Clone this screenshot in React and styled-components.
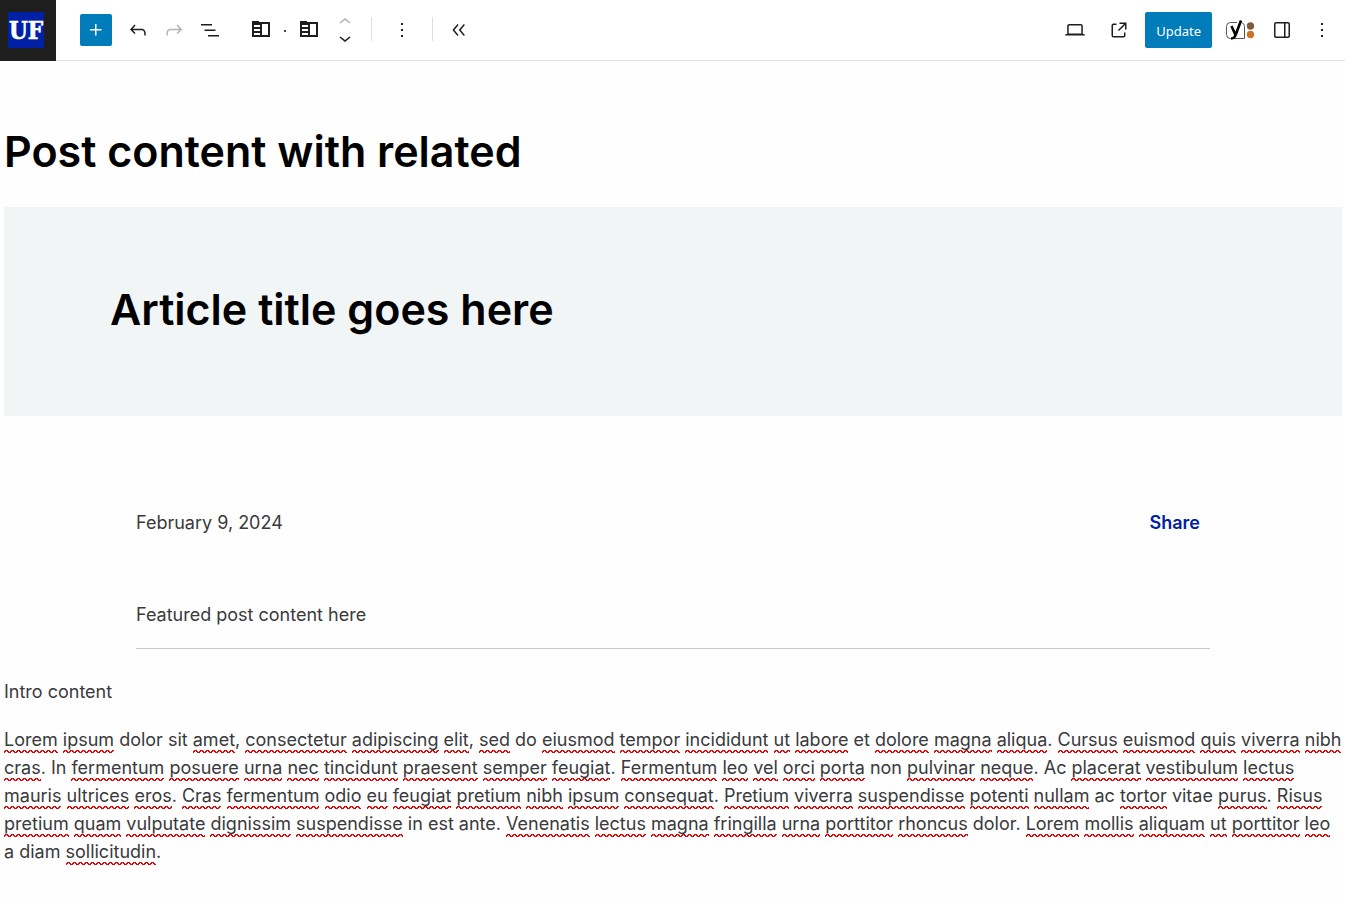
import React from "react";
import styled, { createGlobalStyle } from "styled-components";

const GlobalStyle = createGlobalStyle`
  *, *::before, *::after { box-sizing: border-box; }
  body {
    margin: 0;
    background: #fefefe;
    color: #3a3a3c;
    font-family: Inter, "Liberation Sans", sans-serif;
    font-size: 18px;
    line-height: 28px;
  }
`;

const Header = styled.header`
  display: flex;
  align-items: center;
  height: 61px;
  background: #fff;
  border-bottom: 1px solid #e0e0e0;
`;

const SiteLink = styled.a`
  display: flex;
  flex: none;
  align-self: flex-start;
  align-items: center;
  justify-content: center;
  width: 56px;
  height: 61px;
  padding: 0 4px 1px 0;
  background: #1e1e1e;
`;

const Toolbar = styled.div`
  display: flex;
  flex: 1;
  align-items: center;
  padding-left: 24px;
`;

const Actions = styled.div`
  display: flex;
  align-items: center;
  gap: 8px;
  padding-right: 5px;
`;

const IconButton = styled.button`
  display: flex;
  flex: none;
  align-items: center;
  justify-content: center;
  width: ${(p) => p.$width || 36}px;
  height: 36px;
  padding: 0;
  border: 0;
  background: none;
  color: ${(p) => (p.disabled ? "#b4b4b4" : "#1e1e1e")};
`;

const InsertButton = styled(IconButton)`
  width: 32px;
  height: 32px;
  margin-right: 8px;
  border-radius: 2px;
  background: #007cba;
  color: #fff;
`;

const UpdateButton = styled.button`
  height: 36px;
  padding: 1px 11px 0;
  border: 0;
  border-radius: 2px;
  background: #007cba;
  color: #fff;
  font: 13px/20px "Noto Sans", sans-serif;
`;

const BlockGroup = styled.div`
  display: flex;
  align-items: center;
  gap: 2px;
  padding-left: 15px;
`;

const Dot = styled.span`
  width: 2px;
  height: 2px;
  margin: 2px 3px 0;
  background: #444;
`;

const Movers = styled.div`
  display: flex;
  flex-direction: column;
  width: 24px;
  margin-left: 6px;

  ${IconButton} {
    width: 24px;
    height: 16px;
  }
`;

const Divider = styled.span`
  width: 1px;
  height: 24px;
  margin: 0 ${(p) => p.$after}px 2px ${(p) => p.$before}px;
  background: #ddd;
`;

const Canvas = styled.main`
  padding: 62px 3px 32px 4px;
`;

const Title = styled.h1`
  margin: 0;
  color: #000;
  font-size: 43px;
  font-weight: 600;
  line-height: 56px;
`;

const Hero = styled.section`
  margin-top: 28px;
  padding: 74px 106px 79px;
  background: #f2f5f6;
`;

const HeroTitle = styled(Title).attrs({ as: "h2" })``;

const Details = styled.section`
  margin: 93px 132px 0;
  padding-bottom: 19px;
  border-bottom: 1px solid #c8c8c8;
`;

const Meta = styled.div`
  display: flex;
  justify-content: space-between;
  margin-bottom: 64px;
  padding-right: 10px;
`;

const ShareLink = styled.a`
  color: #0021a5;
  font-weight: 600;
  text-decoration: none;
`;

const Text = styled.p`
  margin: 0;
`;

const Body = styled.div`
  display: flex;
  flex-direction: column;
  gap: 20px;
  margin-top: 29px;
`;

const squiggle =
  "%3Csvg xmlns='http://www.w3.org/2000/svg' width='6' height='3' shape-rendering='crispEdges'%3E%3Cpath fill='%23e80000' d='M1 0h3v1H1zM0 1h2v1H0zM3 1h2v1H3zM4 2h2v1H4zM0 2h1v1H0z'/%3E%3C/svg%3E";

const Misspelled = styled.span`
  padding-bottom: 3px;
  background: url("data:image/svg+xml,${squiggle}") repeat-x left bottom;
`;

const Icon = ({ d, size = 24 }) => (
  <svg width={size} height={size} viewBox="0 0 24 24" fill="currentColor" aria-hidden="true">
    <path d={d} />
  </svg>
);

const icons = {
  plus: "M11 12.5V17.5H12.5V12.5H17.5V11H12.5V6H11V11H6V12.5H11Z",
  undo: "M18.3 11.7c-.6-.6-1.4-.9-2.3-.9H6.7l2.9-3.3-1.1-1-4.5 5L8.5 16l1-1-2.7-2.7H16c.5 0 .9.2 1.3.5 1 1 1 3.4 1 4.5v.3h1.5v-.2c0-1.5 0-4.3-1.5-5.7z",
  redo: "M15.6 6.5l-1.1 1 2.9 3.3H8c-.9 0-1.7.3-2.3.9-1.4 1.5-1.4 4.2-1.4 5.6v.2h1.5v-.3c0-1.1 0-3.5 1-4.5.3-.3.7-.5 1.3-.5h9.2L14.5 15l1.1 1.1 4.6-4.6-4.6-5.1z",
  list: "M3 6h11v1.5H3V6Zm3.5 5.5h11V13h-11v-1.5ZM21 17H10v1.5h11V17Z",
  up: "M6.5 12.4L12 8l5.5 4.4-.9 1.2L12 10l-4.5 3.6-1-1.2z",
  down: "M17.5 11.6L12 16l-5.5-4.4.9-1.2L12 14l4.5-3.6 1 1.2z",
  more: "M13 19h-2v-2h2v2zm0-6h-2v-2h2v2zm0-6h-2V5h2v2z",
  collapse: "M11.6 7.1l-1.1-1L5.4 12l5.1 5.9 1.1-1L7.4 12zM17.9 7.1l-1.1-1L11.7 12l5.1 5.9 1.1-1L13.7 12z",
  desktop: "M20.5 16h-.7V8c0-1.1-.9-2-2-2H6.2c-1.1 0-2 .9-2 2v8h-.7c-.8 0-1.5.7-1.5 1.5h20c0-.8-.7-1.5-1.5-1.5zM5.7 8c0-.3.2-.5.5-.5h11.6c.3 0 .5.2.5.5v7.6H5.7V8z",
  external: "M19.5 4.5h-7V6h4.44l-5.97 5.97 1.06 1.06L18 7.06v4.44h1.5v-7Zm-13 1a2 2 0 0 0-2 2v10a2 2 0 0 0 2 2h10a2 2 0 0 0 2-2v-3H17v3a.5.5 0 0 1-.5.5h-10a.5.5 0 0 1-.5-.5v-10a.5.5 0 0 1 .5-.5h3V5.5h-3Z",
  sidebar: "M18 4H6c-1.1 0-2 .9-2 2v12c0 1.1.9 2 2 2h12c1.1 0 2-.9 2-2V6c0-1.1-.9-2-2-2zm-4 14.5H6c-.3 0-.5-.2-.5-.5V6c0-.3.2-.5.5-.5h8v13zm4.5-.5c0 .3-.2.5-.5.5h-2.5v-13H18c.3 0 .5.2.5.5v12z",
};

const SiteLogo = () => (
  <svg width="36" height="36" viewBox="0 0 36 36" aria-hidden="true">
    <rect width="36" height="36" fill="#0021a5" />
    <text
      x="18"
      y="27"
      textAnchor="middle"
      fill="#fff"
      stroke="#fff"
      strokeWidth="0.6"
      fontFamily="'DejaVu Serif Condensed', 'DejaVu Serif', serif"
      fontWeight="700"
      fontSize="24"
    >
      UF
    </text>
  </svg>
);

const BlockIcon = () => (
  <svg width="20" height="18" viewBox="0 1 20 18" aria-hidden="true">
    <path
      fill="#1e1e1e"
      fillRule="evenodd"
      d="M1 1h7v1h11v15H1zM3 5v2h6V5zM3 9v2h6V9zM3 13v2h6v-2zM11 4v11h6V4z"
    />
  </svg>
);

const SeoIcon = () => (
  <svg width="28" height="22" viewBox="0 0 28 22" aria-hidden="true">
    <path
      fill="none"
      stroke="#555"
      d="M11 3.5H4.5a4 4 0 0 0-4 4v8a4 4 0 0 0 4 4h14v-12a4 4 0 0 0-2.5-3.7"
    />
    <path fill="none" stroke="#000" strokeWidth="2.6" d="M5.5 7l4 9M15 1.5L9.8 15.5Q8.6 19.5 5 19.5" />
    <circle cx="24.5" cy="7" r="3.7" fill="#7f5b35" />
    <circle cx="24.5" cy="15.5" r="3.7" fill="#cb7428" />
  </svg>
);

const lorem =
  "Lorem ipsum dolor sit amet, consectetur adipiscing elit, sed do eiusmod tempor incididunt ut labore et dolore magna aliqua. Cursus euismod quis viverra nibh cras. In fermentum posuere urna nec tincidunt praesent semper feugiat. Fermentum leo vel orci porta non pulvinar neque. Ac placerat vestibulum lectus mauris ultrices eros. Cras fermentum odio eu feugiat pretium nibh ipsum consequat. Pretium viverra suspendisse potenti nullam ac tortor vitae purus. Risus pretium quam vulputate dignissim suspendisse in est ante. Venenatis lectus magna fringilla urna porttitor rhoncus dolor. Lorem mollis aliquam ut porttitor leo a diam sollicitudin.";

const dictionary = new Set(["dolor", "sit", "do", "et", "in", "non", "ac", "vitae", "est", "ante", "a", "diam"]);

const SpellChecked = ({ children }) =>
  children
    .split(/([A-Za-z]+)/)
    .map((part, i) =>
      i % 2 === 1 && !dictionary.has(part.toLowerCase()) ? <Misspelled key={i}>{part}</Misspelled> : part
    );

export default function App() {
  return (
    <>
      <GlobalStyle />
      <Header>
        <SiteLink href="#" aria-label="View posts">
          <SiteLogo />
        </SiteLink>
        <Toolbar>
          <InsertButton aria-label="Add block"><Icon d={icons.plus} /></InsertButton>
          <IconButton aria-label="Undo"><Icon d={icons.undo} /></IconButton>
          <IconButton aria-label="Redo" disabled><Icon d={icons.redo} /></IconButton>
          <IconButton aria-label="Document overview"><Icon d={icons.list} /></IconButton>
          <BlockGroup>
            <IconButton aria-label="Select parent block"><BlockIcon /></IconButton>
            <Dot />
            <IconButton aria-label="Change block type"><BlockIcon /></IconButton>
          </BlockGroup>
          <Movers>
            <IconButton aria-label="Move up" disabled><Icon d={icons.up} /></IconButton>
            <IconButton aria-label="Move down"><Icon d={icons.down} /></IconButton>
          </Movers>
          <Divider $before={14} $after={12} />
          <IconButton aria-label="Options"><Icon d={icons.more} /></IconButton>
          <Divider $before={12} $after={8} />
          <IconButton aria-label="Hide block tools"><Icon d={icons.collapse} /></IconButton>
        </Toolbar>
        <Actions>
          <IconButton aria-label="Preview"><Icon d={icons.desktop} /></IconButton>
          <IconButton aria-label="View post"><Icon d={icons.external} /></IconButton>
          <UpdateButton>Update</UpdateButton>
          <IconButton $width={40} aria-label="SEO"><SeoIcon /></IconButton>
          <IconButton $width={28} aria-label="Settings"><Icon d={icons.sidebar} /></IconButton>
          <IconButton aria-label="More options"><Icon d={icons.more} /></IconButton>
        </Actions>
      </Header>
      <Canvas>
        <Title>Post content with related</Title>
        <Hero>
          <HeroTitle>Article title goes here</HeroTitle>
        </Hero>
        <Details>
          <Meta>
            <time dateTime="2024-02-09">February 9, 2024</time>
            <ShareLink href="#">Share</ShareLink>
          </Meta>
          <Text>Featured post content here</Text>
        </Details>
        <Body>
          <Text>Intro content</Text>
          <Text><SpellChecked>{lorem}</SpellChecked></Text>
        </Body>
      </Canvas>
    </>
  );
}
